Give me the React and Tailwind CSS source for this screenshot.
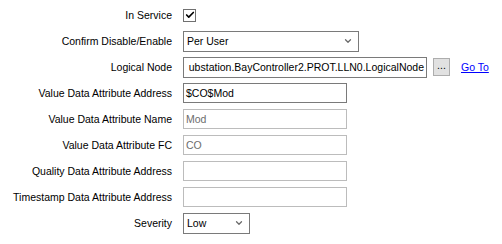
import { Check, ChevronDown } from "lucide-react";

const labelCls = "text-right pr-[11px] text-black whitespace-nowrap";

function Row({ label, children }) {
  return (
    <div className="flex items-center h-[26px]">
      <div className={`w-[183px] ${labelCls}`}>{label}</div>
      <div className="flex items-center">{children}</div>
    </div>
  );
}

function TextBox({ value, disabled }) {
  return (
    <div
      className={`w-[164px] h-[20px] flex items-center pl-[2px] bg-white border ${
        disabled ? "border-[#bcbcbc] text-[#6d6d6d]" : "border-[#7a7a7a] text-black"
      }`}
    >
      {value}
    </div>
  );
}

function Select({ value, width }) {
  return (
    <div
      className={`${width} h-[21px] flex items-center justify-between pl-[3px] pr-[5px] bg-white border border-[#7a7a7a]`}
    >
      <span>{value}</span>
      <ChevronDown size={10} strokeWidth={3} className="text-[#6a6a6a]" />
    </div>
  );
}

export default function App() {
  return (
    <div
      className="w-[502px] h-[244px] bg-white pt-[2px] text-[10.5px] leading-none"
      style={{ fontFamily: '"Liberation Sans", Arial, sans-serif' }}
    >
      <Row label="In Service">
        <div className="w-[13px] h-[13px] border border-[#707070] bg-white flex items-center justify-center">
          <Check size={10} strokeWidth={4} className="text-black" />
        </div>
      </Row>
      <Row label="Confirm Disable/Enable">
        <Select value="Per User" width="w-[176px]" />
      </Row>
      <Row label="Logical Node">
        <div className="w-[244px] h-[21px] flex items-center justify-end pr-[2px] bg-white border border-[#7a7a7a] overflow-hidden whitespace-nowrap">
          <span className="shrink-0">ubstation.BayController2.PROT.LLN0.LogicalNode</span>
        </div>
        <div className="ml-[6px] w-[17px] h-[18px] flex items-center justify-center bg-[#e1e1e1] border border-[#adadad] pb-[3px]">
          ...
        </div>
        <a className="ml-[11px] text-[#0000ff] underline">Go To</a>
      </Row>
      <Row label="Value Data Attribute Address">
        <TextBox value="$CO$Mod" />
      </Row>
      <Row label="Value Data Attribute Name">
        <TextBox value="Mod" disabled />
      </Row>
      <Row label="Value Data Attribute FC">
        <TextBox value="CO" disabled />
      </Row>
      <Row label="Quality Data Attribute Address">
        <TextBox value="" disabled />
      </Row>
      <Row label="Timestamp Data Attribute Address">
        <TextBox value="" disabled />
      </Row>
      <Row label="Severity">
        <Select value="Low" width="w-[67px]" />
      </Row>
    </div>
  );
}
